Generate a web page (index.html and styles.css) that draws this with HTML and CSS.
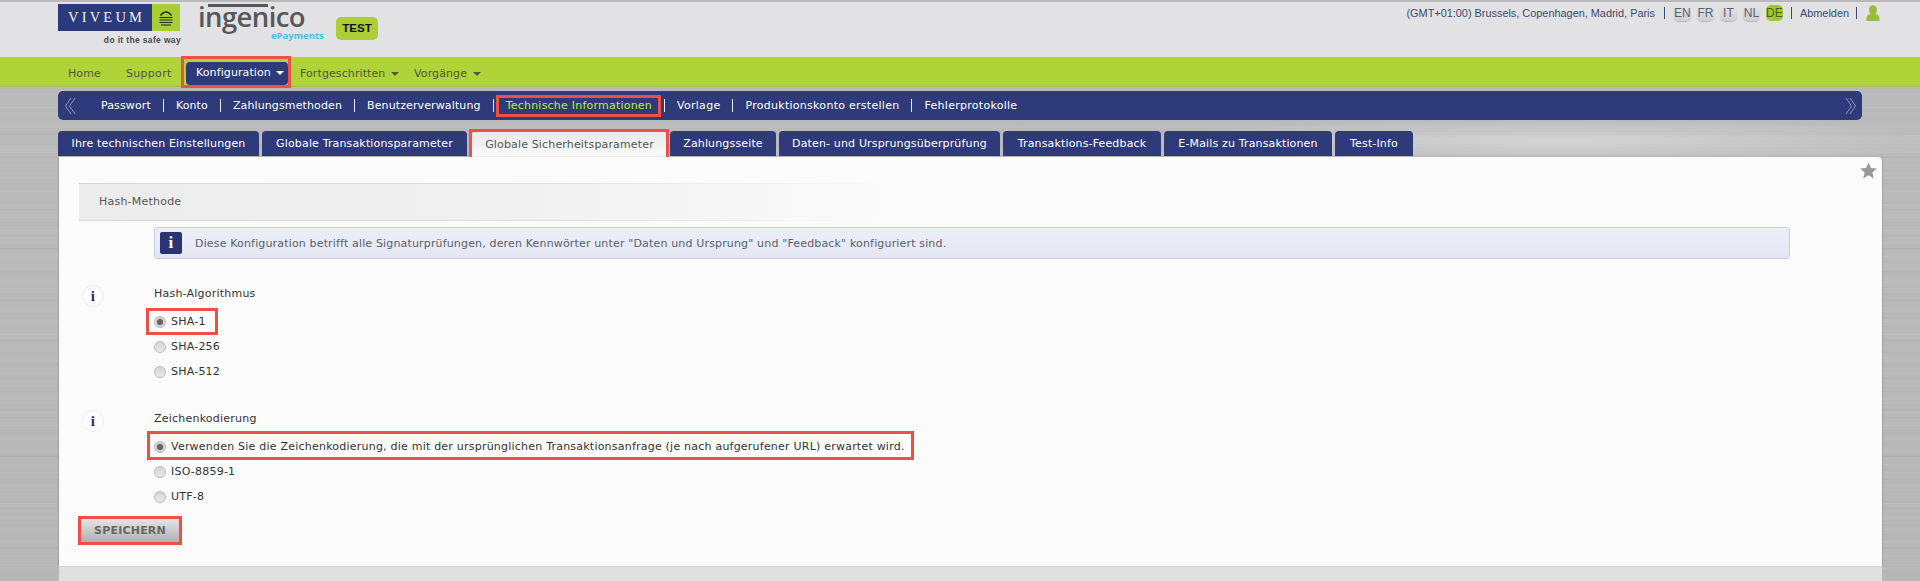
FILE: index.html
```html
<!DOCTYPE html>
<html lang="de">
<head>
<meta charset="utf-8">
<title>Hash-Methode</title>
<link rel="stylesheet" href="styles.css">
</head>
<body>
<header class="top">
  <div class="brand">
    <div class="viveum">
      <div class="viveum-bar">
        <span class="viveum-name">VIVEUM</span>
        <span class="viveum-mark">
          <svg width="16" height="16" viewBox="0 0 16 16"><path d="M2.5 5.5Q8 -1.5 13.5 5.5" fill="none" stroke="#1c2a20" stroke-width="1.3"/><path d="M1.5 7.5h13M1.5 10h13M1.5 12.5h13M3 15h10" stroke="#1c2a20" stroke-width="1.2"/></svg>
        </span>
      </div>
      <div class="viveum-tag">do it the safe way</div>
    </div>
    <div class="ingenico">
      <span class="ingenico-name">ingenico</span>
      <span class="ingenico-sub">ePayments</span>
    </div>
    <div class="test-badge">TEST</div>
  </div>
  <div class="top-right">
    <span>(GMT+01:00) Brussels, Copenhagen, Madrid, Paris</span>
    <i class="vsep"></i>
    <span class="langs">
      <a class="lang">EN</a><a class="lang">FR</a><a class="lang">IT</a><a class="lang">NL</a><a class="lang lang-on">DE</a>
    </span>
    <i class="vsep vsep-a"></i>
    <span>Abmelden</span>
    <i class="vsep vsep-b"></i>
    <svg class="user" width="14" height="16" viewBox="0 0 14 16"><ellipse cx="7" cy="5" rx="4" ry="4.8" fill="#9dbb3a"/><path d="M0.5 16V13Q1 9.5 4.5 9H9.5Q13 9.5 13.5 13V16Z" fill="#9dbb3a"/></svg>
  </div>
</header>

<nav class="mainnav">
  <a class="m-item m-home">Home</a>
  <a class="m-item m-support">Support</a>
  <a class="m-item m-active mark mark-a">Konfiguration <b class="caret caret-w"></b></a>
  <a class="m-item m-fort">Fortgeschritten <b class="caret"></b></a>
  <a class="m-item">Vorgänge <b class="caret"></b></a>
</nav>

<main class="content">
  <nav class="subnav">
    <svg class="chev" width="12" height="18" viewBox="0 0 12 18"><path d="M7 1 1.5 9 7 17M11 1 5.5 9 11 17" fill="none" stroke="#8f97c4" stroke-width="1"/></svg>
    <div class="sub-items">
      <a>Passwort</a><i></i><a>Konto</a><i></i><a>Zahlungsmethoden</a><i></i><a>Benutzerverwaltung</a><i></i>
      <a class="sub-on mark mark-b">Technische Informationen</a><i></i><a class="sub-wide">Vorlage</a><i></i><a class="sub-wide">Produktionskonto erstellen</a><i></i><a class="sub-wide">Fehlerprotokolle</a>
    </div>
    <svg class="chev" width="12" height="18" viewBox="0 0 12 18"><path d="M1 1 6.5 9 1 17M5 1 10.5 9 5 17" fill="none" stroke="#8f97c4" stroke-width="1"/></svg>
  </nav>

  <div class="tabs">
    <a class="tab t1">Ihre technischen Einstellungen</a>
    <a class="tab t2">Globale Transaktionsparameter</a>
    <a class="tab tab-on mark mark-c">Globale Sicherheitsparameter</a>
    <a class="tab t4">Zahlungsseite</a>
    <a class="tab t5">Daten- und Ursprungsüberprüfung</a>
    <a class="tab t6">Transaktions-Feedback</a>
    <a class="tab t7">E-Mails zu Transaktionen</a>
    <a class="tab t8">Test-Info</a>
  </div>

  <section class="panel">
    <svg class="star" width="17" height="17" viewBox="0 0 17 17"><path d="M8.5 0.5 11 6 16.8 6.6 12.4 10.5 13.8 16.5 8.5 13.3 3.2 16.5 4.6 10.5 0.2 6.6 6 6Z" fill="#999"/></svg>
    <h2 class="section-head">Hash-Methode</h2>
    <div class="notice">
      <span class="notice-i">i</span>
      <span>Diese Konfiguration betrifft alle Signaturprüfungen, deren Kennwörter unter "Daten und Ursprung" und "Feedback" konfiguriert sind.</span>
    </div>

    <div class="group">
      <span class="help">i</span>
      <div class="fields">
        <div class="field-label">Hash-Algorithmus</div>
        <label class="opt mark mark-d"><input type="radio" name="hash" checked><span>SHA-1</span></label>
        <label class="opt"><input type="radio" name="hash"><span>SHA-256</span></label>
        <label class="opt"><input type="radio" name="hash"><span>SHA-512</span></label>
      </div>
    </div>

    <div class="group">
      <span class="help">i</span>
      <div class="fields">
        <div class="field-label">Zeichenkodierung</div>
        <label class="opt mark mark-e"><input type="radio" name="enc" checked><span>Verwenden Sie die Zeichenkodierung, die mit der ursprünglichen Transaktionsanfrage (je nach aufgerufener URL) erwartet wird.</span></label>
        <label class="opt"><input type="radio" name="enc"><span>ISO-8859-1</span></label>
        <label class="opt"><input type="radio" name="enc"><span>UTF-8</span></label>
      </div>
    </div>

    <button class="save mark mark-f" type="button">SPEICHERN</button>
  </section>
  <div class="panel-foot"></div>
</main>
</body>
</html>
```
FILE: styles.css
```css
*, *::after, *::before { box-sizing: border-box; }
html, body { margin: 0; padding: 0; }
body {
  width: 1920px;
  height: 581px;
  overflow: hidden;
  font-family: "DejaVu Sans", Verdana, sans-serif;
  font-size: 11px;
  background: #b8b8b8;
}
a { color: inherit; text-decoration: none; }

/* red annotation frames */
.mark { position: relative; }
.mark::after {
  content: "";
  position: absolute;
  border: 3px solid #ee4f46;
  pointer-events: none;
}
.mark-a::after { inset: -6px -3px -3px -5px; }
.mark-b::after { left: -10px; right: -9px; top: -4px; bottom: -5px; }
.mark-c::after { left: -3px; right: -2px; top: -3px; bottom: -5px; }
.mark-d::after { left: -8px; top: -1px; bottom: -1px; width: 72px; }
.mark-e::after { left: -7px; top: -3px; bottom: -1px; width: 767px; }
.mark-f::after { inset: -3px; }

/* top header */
.top {
  height: 57px;
  background: #e2e2e4;
  border-top: 2px solid #b9b9b9;
  display: flex;
  justify-content: space-between;
  padding-left: 58px;
}
.brand { display: flex; align-items: flex-start; }
.viveum { width: 124px; margin-top: 2px; }
.viveum-bar { display: flex; width: 122px; height: 27px; }
.viveum-name {
  flex: 1;
  background: #2b3a7b;
  color: #f2f2f2;
  font: 14.5px/27px "Liberation Serif", serif;
  letter-spacing: 3.2px;
  padding-left: 10px;
}
.viveum-mark {
  width: 28px;
  background: #a9cd36;
  display: flex;
  align-items: center;
  justify-content: center;
}
.viveum-tag {
  margin-top: 3px;
  padding-right: 1px;
  text-align: right;
  font: bold 8.5px/12px "Liberation Sans", sans-serif;
  color: #4a4a4a;
  letter-spacing: .35px;
}
.ingenico { position: relative; width: 136px; height: 42px; margin-left: 18px; }
.ingenico-name {
  position: absolute;
  left: -2px;
  top: -4px;
  font: 600 27.5px/38px "Open Sans", sans-serif;
  letter-spacing: -.6px;
  color: #57585a;
}
.ingenico::before {
  content: "";
  position: absolute;
  left: 8px;
  top: 2px;
  width: 60px;
  height: 3px;
  background: #57585a;
}
.ingenico-sub {
  position: absolute;
  left: 71px;
  top: 28px;
  font: 700 9.5px/12px "Open Sans", sans-serif;
  color: #45c0e2;
}
.test-badge {
  margin-top: 15px;
  width: 42px;
  height: 23px;
  background: #aecd38;
  border-radius: 5px;
  color: #111;
  font: bold 11.5px/23px "Liberation Sans", sans-serif;
  text-align: center;
}
.top-right {
  display: flex;
  align-items: center;
  align-self: flex-start;
  height: 22px;
  padding-right: 40px;
  font: 10.9px/22px "Liberation Sans", Arial, sans-serif;
  color: #3b4a6b;
}
.vsep { width: 1px; height: 12px; background: #3b4a6b; margin: 0 9px; }
.vsep-a { margin: 0 8px; }
.vsep-b { margin: 0 9px 0 7px; }
.langs { display: flex; gap: 6px; font-size: 12px; }
.lang {
  width: 17px;
  height: 16px;
  line-height: 16px;
  text-align: center;
  border-radius: 5px;
  background: linear-gradient(#e4e4e6, #cfcfd2);
  box-shadow: 0 1px 1px #b5b5b5;
  color: #55607a;
}
.lang-on { background: #a4c72e; box-shadow: none; color: #4d5f20; }

/* green main nav */
.mainnav {
  height: 30px;
  background: #b0d33a;
  border-bottom: 1px solid #a4bd4c;
  display: flex;
  align-items: center;
  padding: 4px 0 0 68px;
  color: #4b5a3a;
  letter-spacing: .1px;
}
.m-item { white-space: nowrap; }
.m-home { width: 58px; }
.m-support { width: 60px; letter-spacing: .3px; }
.m-active {
  width: 102px;
  height: 23px;
  line-height: 22px;
  padding-left: 10px;
  background: #2e3a79;
  color: #fff;
  border-radius: 4px;
  margin-right: 12px;
}
.m-fort { margin-right: 15px; }
.caret {
  display: inline-block;
  width: 0;
  height: 0;
  margin-left: 2px;
  vertical-align: 1px;
  border: 4px solid transparent;
  border-bottom: 0;
  border-top-color: #4b5a3a;
}
.caret-w { border-top-color: #fff; }

/* metal content area */
.content {
  height: 492px;
  padding: 4px 0 0 58px;
  background:
    radial-gradient(ellipse 420px 22px at 1560px 54px, rgba(255,255,255,.38), rgba(255,255,255,0)),
    repeating-linear-gradient(180deg, rgba(255,255,255,.05) 0 1px, rgba(255,255,255,0) 1px 5px, rgba(0,0,0,.025) 5px 6px, rgba(255,255,255,0) 6px 13px),
    repeating-linear-gradient(180deg, rgba(0,0,0,.02) 0 2px, rgba(255,255,255,0) 2px 17px, rgba(255,255,255,.04) 17px 18px, rgba(255,255,255,0) 18px 23px),
    linear-gradient(#bbbbbb, #b8b8b8);
}

/* sub nav */
.subnav {
  width: 1804px;
  height: 29px;
  background: #2e3a79;
  border-radius: 5px;
  display: flex;
  align-items: center;
  justify-content: space-between;
  padding: 0 5px 0 6px;
  color: #fff;
}
.sub-items {
  flex: 1;
  display: flex;
  align-items: center;
  padding-left: 25px;
  letter-spacing: .12px;
  white-space: nowrap;
}
.sub-items i { width: 1px; height: 13px; background: #e8e8f0; margin: 0 12px; }
.sub-on { color: #bdf02a; letter-spacing: .22px; }
.sub-wide { letter-spacing: .28px; }

/* tabs */
.tabs { display: flex; margin-top: 11px; height: 26px; }
.tab {
  height: 25px;
  line-height: 25px;
  padding: 0 13px;
  background: #2e3a79;
  color: #fff;
  border-radius: 4px 4px 0 0;
  margin-right: 3px;
  letter-spacing: .15px;
  white-space: nowrap;
  text-align: center;
}
.t1 { width: 201px; }
.t2 { width: 205px; }
.tab-on {
  width: 195px;
  margin-left: 2px;
  padding: 0;
  height: 26px;
  color: #555;
  background: linear-gradient(#e9e9e9, #fafafa);
  border-top: 1px solid #ccc;
}
.t4 { width: 106px; }
.t5 { width: 221px; }
.t6 { width: 158px; }
.t7 { width: 168px; }
.t8 { width: 78px; margin-right: 0; }

/* panel */
.panel {
  position: relative;
  width: 1823px;
  height: 409px;
  margin-left: 1px;
  padding: 26px 0 0 20px;
  background: #fbfbfb;
  border-radius: 0 4px 0 0;
  box-shadow: -1px 0 1px #a0a0a0, 1px 0 1px #a0a0a0;
  color: #333;
  letter-spacing: .22px;
}
.panel-foot { width: 1823px; height: 20px; margin-left: 1px; background: #e0e0e0; }
.star { position: absolute; right: 5px; top: 5px; }
.section-head {
  margin: 0;
  width: 815px;
  height: 38px;
  padding-left: 20px;
  font: inherit;
  line-height: 36px;
  color: #555;
  background: linear-gradient(90deg, #ececec, #f0f0f0 50%, #fbfbfb);
  border-top: 1px solid;
  border-bottom: 1px solid;
  border-image: linear-gradient(90deg, #d4d4d4, #e0e0e0 60%, #fbfbfb) 1;
}
.notice {
  display: flex;
  align-items: center;
  gap: 13px;
  width: 1636px;
  height: 32px;
  margin: 6px 0 0 75px;
  padding-left: 5px;
  background: linear-gradient(#eceef7, #e4e6f2);
  border: 1px solid #c9cbef;
  border-radius: 3px;
  color: #5a5f6e;
  letter-spacing: .16px;
}
.notice-i {
  width: 22px;
  height: 22px;
  background: #2a3473;
  border-radius: 2px;
  color: #fff;
  font: bold 17px/22px "Liberation Serif", serif;
  text-align: center;
}
.group { display: flex; margin-top: 26px; }
.help {
  width: 22px;
  height: 22px;
  margin: 0 50px 0 3px;
  border-radius: 50%;
  border: 1px solid #ececec;
  background: #fff;
  color: #2c2a72;
  font: bold 15px/20px "Liberation Serif", serif;
  text-align: center;
}
.field-label { height: 18px; line-height: 18px; margin-bottom: 6px; }
.opt { display: flex; align-items: center; height: 25px; gap: 5px; white-space: nowrap; }
.opt input {
  appearance: none;
  width: 12px;
  height: 12px;
  margin: 0;
  border-radius: 50%;
  border: 1px solid #b9b9b9;
  background: linear-gradient(#d4d4d4, #eaeaea);
}
.opt input:checked {
  background: radial-gradient(circle, #666 0 2.8px, #d4d4d4 3.4px);
}
.save {
  display: block;
  width: 100px;
  height: 25px;
  margin: 9px 0 0 1px;
  padding: 0;
  border: 1px solid #e8e8e8;
  background: linear-gradient(#e4e4e4, #b0b0b0);
  color: #666;
  font: bold 11px/23px "DejaVu Sans", sans-serif;
  letter-spacing: .2px;
}
```
